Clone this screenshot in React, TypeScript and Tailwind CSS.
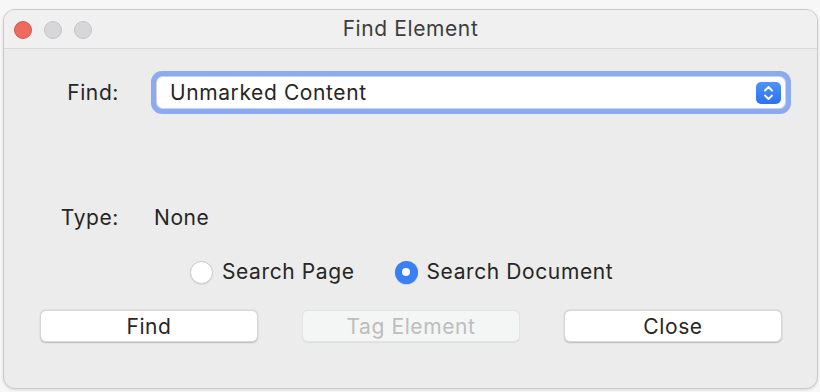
import React from "react";

const font = { fontFamily: "Inter, 'Liberation Sans', sans-serif" };

function TrafficLight({ color }: { color: "red" | "gray" }) {
  return (
    <div
      className={
        color === "red"
          ? "h-[18px] w-[18px] rounded-full border border-[#d9574c] bg-[#ed6a5e]"
          : "h-[18px] w-[18px] rounded-full border border-[#c4c4c6] bg-[#d7d7d9]"
      }
    />
  );
}

function Radio({ checked, label }: { checked: boolean; label: string }) {
  return (
    <label className="flex items-center gap-[9px]">
      {checked ? (
        <span className="flex h-[23px] w-[23px] items-center justify-center rounded-full bg-[#3a7ff6] shadow-[0_0.5px_1px_rgba(0,0,0,0.2)]">
          <span className="h-[8px] w-[8px] rounded-full bg-white" />
        </span>
      ) : (
        <span className="h-[23px] w-[23px] rounded-full border border-[#cdcdcd] bg-white shadow-[0_0.5px_1px_rgba(0,0,0,0.12)]" />
      )}
      <span>{label}</span>
    </label>
  );
}

function PushButton({ label, disabled }: { label: string; disabled?: boolean }) {
  return (
    <button
      disabled={disabled}
      className={
        disabled
          ? "h-[32px] w-[218px] rounded-[6px] border border-[#e2e3e3] bg-[#f4f5f5] tracking-[0.6px] text-[#bdbdbd] shadow-[0_0.5px_1px_rgba(0,0,0,0.06)]"
          : "h-[32px] w-[218px] rounded-[6px] border border-[#d6d6d6] bg-white tracking-[0.6px] text-[#262626] shadow-[0_0.5px_1.5px_rgba(0,0,0,0.22)]"
      }
    >
      {label}
    </button>
  );
}

export default function App() {
  return (
    <div className="h-[392px] w-[820px] overflow-hidden bg-[#f7f7f7] pt-[9px] pl-[3px]" style={font}>
      <div className="flex h-[380px] w-[815px] flex-col overflow-hidden rounded-[12px] border border-[#c9c9c9] bg-[#ececec] text-[21px] tracking-[0.6px] text-[#262626] shadow-[0_1px_3px_rgba(0,0,0,0.12)]">
        {/* title bar */}
        <div className="grid h-[39px] shrink-0 grid-cols-[1fr_auto_1fr] items-center border-b border-[#d9d9d9] bg-[#f0f0f1]">
          <div className="flex items-center gap-[12px] pl-[10px] pt-[1px]">
            <TrafficLight color="red" />
            <TrafficLight color="gray" />
            <TrafficLight color="gray" />
          </div>
          <div className="text-[21px] text-[#3d3d3d]">Find Element</div>
          <div />
        </div>

        {/* body */}
        <div className="flex flex-col pt-[22px]">
          <div className="flex h-[43px] items-center">
            <div className="w-[115px] text-right">Find:</div>
            <div className="ml-[32px] flex h-[43px] w-[640px] rounded-[11px] bg-[#8caaee] p-[5px]">
              <div className="flex flex-1 items-center justify-between rounded-[7px] bg-white pl-[14px] pr-[5px] shadow-[inset_0_0_0_1px_rgba(100,130,210,0.35)]">
                <span>Unmarked Content</span>
                <span className="flex h-[22px] w-[25px] items-center justify-center rounded-[5px] bg-gradient-to-b from-[#4d93f8] to-[#2f71f0]">
                  <svg width="11" height="16" viewBox="0 0 11 16" fill="none" stroke="white" strokeWidth="1.8" strokeLinecap="round" strokeLinejoin="round">
                    <path d="M2 5.5 L5.5 2 L9 5.5" />
                    <path d="M2 10.5 L5.5 14 L9 10.5" />
                  </svg>
                </span>
              </div>
            </div>
          </div>

          <div className="mt-[92px] flex h-[24px] items-center">
            <div className="w-[115px] text-right">Type:</div>
            <div className="ml-[35px]">None</div>
          </div>

          <div className="mt-[30px] flex h-[24px] items-center gap-[40px] pl-[186px]">
            <Radio checked={false} label="Search Page" />
            <Radio checked label="Search Document" />
          </div>

          <div className="mt-[26px] flex gap-[44px] pl-[36px]">
            <PushButton label="Find" />
            <PushButton label="Tag Element" disabled />
            <PushButton label="Close" />
          </div>
        </div>
      </div>
    </div>
  );
}
